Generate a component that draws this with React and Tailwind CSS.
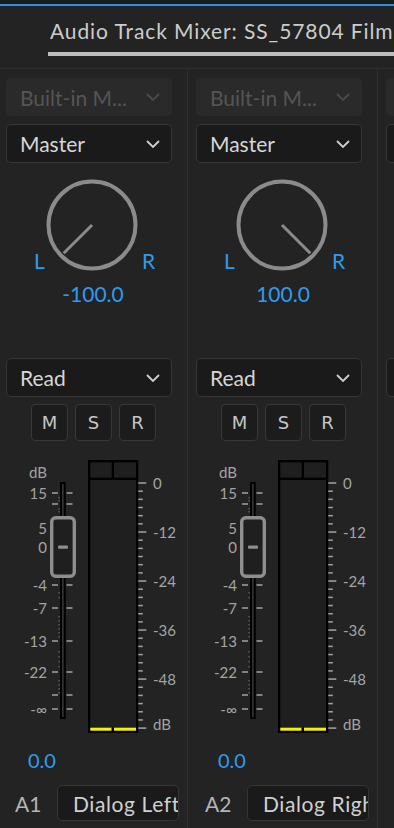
import React from "react";

const blue = "text-[#2d9cf0]";

function Chevron({ color }) {
  return (
    <svg width="14" height="8" viewBox="0 0 14 8" className={`block ${color}`}>
      <polyline points="1,1 7,7 13,1" fill="none" stroke="currentColor" strokeWidth="1.8" />
    </svg>
  );
}

function Dropdown({ label, disabled, h = "h-[39px]", className = "" }) {
  const tone = disabled
    ? "bg-[#2a2a2a] border-transparent text-[#555555]"
    : "bg-[#1a1a1a] border-[#363636] text-[#d6d6d6]";
  return (
    <div
      className={`flex items-center justify-between w-[166px] ${h} rounded-[5px] border pl-[13px] pr-[11px] text-[21px] leading-none ${tone} ${className}`}
    >
      <span className="whitespace-nowrap">{label}</span>
      <Chevron color={disabled ? "text-[#4a4a4a]" : "text-[#cfcfcf]"} />
    </div>
  );
}

function Knob({ pan }) {
  // -100 .. 100 maps to -135 .. 135 degrees from straight up
  const rad = ((pan / 100) * 135 * Math.PI) / 180;
  const x2 = 46 + 40 * Math.sin(rad);
  const y2 = 46 - 40 * Math.cos(rad);
  return (
    <svg width="92" height="92" viewBox="0 0 92 92" className="block">
      <circle cx="46" cy="46" r="43.5" fill="none" stroke="#8b8b8b" strokeWidth="4" />
      <line x1="46" y1="46" x2={x2} y2={y2} stroke="#8b8b8b" strokeWidth="3" />
    </svg>
  );
}

const faderTicks = [
  { y: 493, l: "15" },
  { y: 504 },
  { y: 528, l: "5" },
  { y: 547, l: "0" },
  { y: 585, l: "-4" },
  { y: 608, l: "-7" },
  { y: 641, l: "-13" },
  { y: 672, l: "-22" },
  { y: 695 },
  { y: 709, l: "-∞" },
];

const dots = [497, 500, 508, 511, 592, 597, 616, 620, 624, 628, 632, 636, 651, 656, 661, 666, 680, 684, 688, 692];

const meterLabels = { 0: "0", 6: "-12", 12: "-24", 18: "-36", 24: "-48", 30: "dB" };

function FaderMeter() {
  const font = "Lato, sans-serif";
  return (
    <svg width="175" height="277" viewBox="6 459 175 277" className="block">
      {/* fader scale */}
      <text x="47" y="478" textAnchor="end" fill="#a3a3a3" fontSize="15" fontFamily={font}>
        dB
      </text>
      {faderTicks.map((t) => (
        <g key={t.y}>
          <rect x="52" y={t.y - 0.75} width="6" height="1.5" fill="#a3a3a3" />
          <rect x="66.5" y={t.y - 0.75} width="6" height="1.5" fill="#a3a3a3" />
          {t.l && (
            <text x="47" y={t.y + 6} textAnchor="end" fill="#a3a3a3" fontSize="15" fontFamily={font}>
              {t.l}
            </text>
          )}
        </g>
      ))}
      {dots.map((y) => (
        <rect key={y} x="58.5" y={y} width="1.2" height="1.5" fill="#6a6a6a" />
      ))}
      {/* track */}
      <rect x="60" y="482" width="5.7" height="237" fill="#000" />
      <rect x="62.2" y="484" width="1.4" height="233" fill="#3c3c3c" />
      {/* handle */}
      <rect x="51.7" y="517.7" width="22.6" height="58.6" rx="4" fill="#1f1f1f" stroke="#8e8e8e" strokeWidth="3.4" />
      <rect x="58" y="545.5" width="10" height="3.2" rx="1" fill="#8e8e8e" />

      {/* meter */}
      <rect x="88" y="460" width="50.3" height="273" fill="#000" />
      <rect x="90.3" y="462.3" width="21.4" height="15.4" fill="#1f1f1f" />
      <rect x="114" y="462.3" width="22" height="15.4" fill="#1f1f1f" />
      <rect x="90.3" y="480" width="45.7" height="250.7" fill="#1f1f1f" />
      <rect x="90.3" y="727.7" width="21.4" height="3" fill="#f4f400" />
      <rect x="111.7" y="727.7" width="2.3" height="3" fill="#000" />
      <rect x="114" y="727.7" width="22" height="3" fill="#f4f400" />

      {/* meter scale */}
      {Array.from({ length: 31 }, (_, i) => {
        const y = 483 + i * 8.17;
        const major = i % 6 === 0;
        return (
          <g key={i}>
            <rect x="138.3" y={y - 0.75} width={major ? 8 : 4.5} height="1.5" fill="#a3a3a3" />
            {meterLabels[i] && (
              <text x="153" y={i === 30 ? y + 2 : y + 5.5} fill="#a3a3a3" fontSize="15" fontFamily={font}>
                {meterLabels[i]}
              </text>
            )}
          </g>
        );
      })}
    </svg>
  );
}

function Strip({ pan, track, name }) {
  const panLabel = pan === 0 ? "0.0" : `${pan.toFixed(1)}`;
  return (
    <div className="w-[190px] h-[759px] shrink-0 border-r border-[#303030] pl-[8px] pt-[9px]">
      <Dropdown label="Built-in M..." disabled h="h-[38px]" />
      <Dropdown label="Master" className="mt-[8px]" />

      {/* pan knob */}
      <div className="flex items-end mt-[16px] pl-[28px] text-[21px] leading-none">
        <span className={`w-[12px] ${blue}`}>L</span>
        <Knob pan={pan} />
        <span className={`ml-[4px] ${blue}`}>R</span>
      </div>
      <div className={`mt-[12px] w-[166px] pl-[8px] text-center text-[21px] leading-none ${blue}`}>
        {panLabel}
      </div>

      <Dropdown label="Read" className="mt-[54px]" />

      {/* mute / solo / record */}
      <div className="flex gap-[7px] mt-[7px] pl-[25px]">
        {["M", "S", "R"].map((b) => (
          <div
            key={b}
            className="w-[37px] h-[37px] flex items-center justify-center rounded-[4px] border border-[#383838] bg-[#1c1c1c] text-[#c6c6c6] text-[18px] leading-none font-['DejaVu_Sans',sans-serif]"
          >
            {b}
          </div>
        ))}
      </div>

      <div className="mt-[18px]">
        <FaderMeter />
      </div>

      <div className={`mt-[14px] pl-[22px] text-[20px] leading-none ${blue}`}>0.0</div>

      <div className="flex items-center mt-[15px]">
        <span className="w-[51px] pl-[9px] text-[21px] leading-none text-[#b5b5b5]">{track}</span>
        <div className="w-[122px] h-[36px] rounded-[5px] border border-[#363636] bg-[#1a1a1a] flex items-center pl-[15px] overflow-hidden whitespace-nowrap text-[21px] leading-none tracking-[0.6px] text-[#d0d0d0]">
          {name}
        </div>
      </div>
    </div>
  );
}

export default function App() {
  return (
    <div className="w-[394px] h-[828px] overflow-hidden bg-[#232323] font-[Lato,sans-serif]">
      <div className="h-[4px] bg-[#1c1c1c]" />
      <div className="h-[2px] bg-[#2f8ce8]" />
      <div className="border-b border-[#2e2e2e] pt-[12px] pb-[12px] pl-[48px]">
        <div className="whitespace-nowrap overflow-hidden pl-[2px] text-[21px] leading-[26px] tracking-[0.9px] text-[#cccccc]">
          Audio Track Mixer: SS_57804 Film Mix
        </div>
        <div className="mt-[8px] h-[4px] bg-[#bdbdbd]" />
      </div>

      <div className="flex -ml-[2px]">
        <Strip pan={-100} track="A1" name="Dialog Left" />
        <Strip pan={100} track="A2" name="Dialog Right" />
        <Strip pan={0} track="A3" name="Music" />
      </div>
    </div>
  );
}
